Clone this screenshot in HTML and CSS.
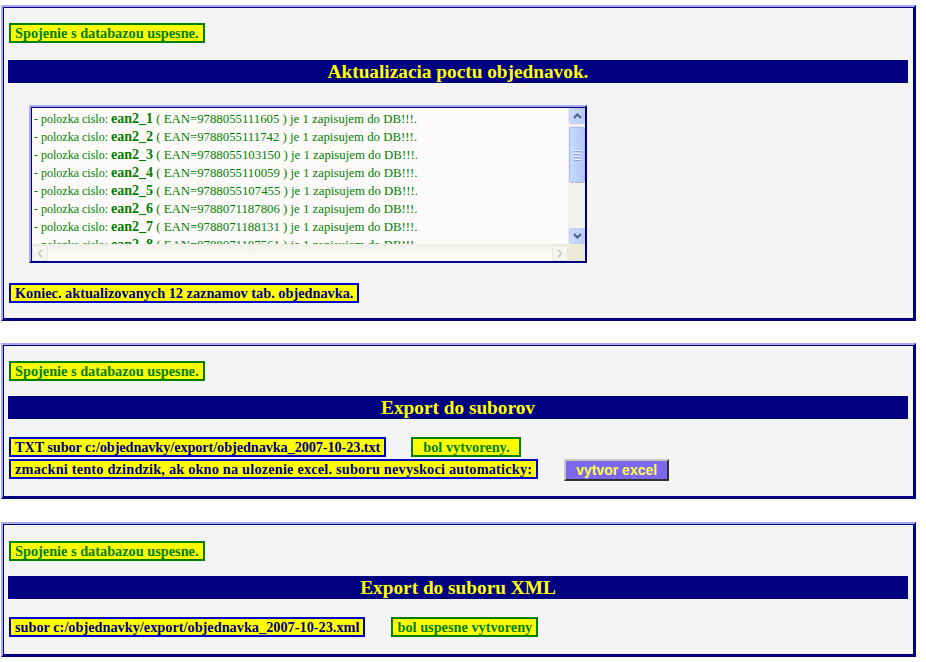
FILE: index.html
```html
<!DOCTYPE html>
<html>
<head>
<meta charset="utf-8">
<link rel="stylesheet" href="styles.css">
</head>
<body>
<div class="panel p1">
  <div class="row"><span class="tag ok">Spojenie s databazou uspesne.</span></div>
  <div class="bar">Aktualizacia poctu objednavok.</div>
  <div class="scroll">
    <div class="scroll-content">
      <div class="line">- polozka cislo: <b>ean2_1</b><span class="rest"> ( EAN=9788055111605 ) je 1 zapisujem do DB!!!.</span></div>
      <div class="line">- polozka cislo: <b>ean2_2</b><span class="rest"> ( EAN=9788055111742 ) je 1 zapisujem do DB!!!.</span></div>
      <div class="line">- polozka cislo: <b>ean2_3</b><span class="rest"> ( EAN=9788055103150 ) je 1 zapisujem do DB!!!.</span></div>
      <div class="line">- polozka cislo: <b>ean2_4</b><span class="rest"> ( EAN=9788055110059 ) je 1 zapisujem do DB!!!.</span></div>
      <div class="line">- polozka cislo: <b>ean2_5</b><span class="rest"> ( EAN=9788055107455 ) je 1 zapisujem do DB!!!.</span></div>
      <div class="line">- polozka cislo: <b>ean2_6</b><span class="rest"> ( EAN=9788071187806 ) je 1 zapisujem do DB!!!.</span></div>
      <div class="line">- polozka cislo: <b>ean2_7</b><span class="rest"> ( EAN=9788071188131 ) je 1 zapisujem do DB!!!.</span></div>
      <div class="line">- polozka cislo: <b>ean2_8</b><span class="rest"> ( EAN=9788071187561 ) je 1 zapisujem do DB!!!.</span></div>
    </div>
    <div class="vbar">
      <div class="sbtn up"><svg width="9" height="6" viewBox="0 0 9 6"><path d="M1 5 L4.5 1.5 L8 5" fill="none" stroke="#4d6185" stroke-width="2"/></svg></div>
      <div class="thumb"><span></span><span></span><span></span><span></span></div>
      <div class="vtrack"></div>
      <div class="sbtn down"><svg width="9" height="6" viewBox="0 0 9 6"><path d="M1 1 L4.5 4.5 L8 1" fill="none" stroke="#4d6185" stroke-width="2"/></svg></div>
    </div>
    <div class="hbar">
      <div class="hbtn"><svg width="6" height="9" viewBox="0 0 6 9"><path d="M5 1 L1.5 4.5 L5 8" fill="none" stroke="#c9c7ba" stroke-width="1.6"/></svg></div>
      <div class="htrack"></div>
      <div class="hbtn"><svg width="6" height="9" viewBox="0 0 6 9"><path d="M1 1 L4.5 4.5 L1 8" fill="none" stroke="#c9c7ba" stroke-width="1.6"/></svg></div>
    </div>
    <div class="corner"></div>
  </div>
  <div class="row"><span class="tag info">Koniec. aktualizovanych 12 zaznamov tab. objednavka.</span></div>
</div>

<div class="panel p2">
  <div class="row"><span class="tag ok">Spojenie s databazou uspesne.</span></div>
  <div class="bar">Export do suborov</div>
  <div class="row r1">
    <span class="tag info tight">TXT subor c:/objednavky/export/objednavka_2007-10-23.txt</span>
    <span class="tag ok roomy">bol vytvoreny.</span>
  </div>
  <div class="row r2">
    <span class="tag info loose">zmackni tento dzindzik, ak okno na ulozenie excel. suboru nevyskoci automaticky:</span>
    <button class="btn">vytvor excel</button>
  </div>
</div>

<div class="panel p3">
  <div class="row"><span class="tag ok">Spojenie s databazou uspesne.</span></div>
  <div class="bar">Export do suboru XML</div>
  <div class="row r1 wide">
    <span class="tag info">subor c:/objednavky/export/objednavka_2007-10-23.xml</span>
    <span class="tag ok">bol uspesne vytvoreny</span>
  </div>
</div>
</body>
</html>
```

FILE: styles.css
```css
html, body {
  margin: 0;
  padding: 0;
  background: #ffffff;
  font-family: "Liberation Serif", "Times New Roman", serif;
}

.panel {
  box-sizing: border-box;
  width: 915px;
  margin-left: 1px;
  background: #f4f4f7;
  border: 2px solid;
  border-color: #a9a9ec #000080 #000080 #a9a9ec;
  box-shadow: inset 1px 1px 0 #000080, inset -1px -1px 0 #000080;
  padding: 16px 6px 16px 5px;
}

.p1 { margin-top: 5px; }
.p2 { margin-top: 22px; }
.p3 { margin-top: 23px; padding-top: 17px; padding-bottom: 18px; }

.row {
  display: flex;
  align-items: flex-start;
  padding-left: 1px;
}

.tag {
  display: inline-block;
  box-sizing: border-box;
  height: 20px;
  line-height: 16px;
  padding: 0 4px 0 4px;
  font-size: 14.3px;
  font-weight: bold;
  background: #ffff00;
  border: 2px solid;
  white-space: nowrap;
}

.tag.ok { color: #008000; border-color: #008000; }
.tag.info { color: #000080; border-color: #0000cc; }
.tag.tight { letter-spacing: -0.1px; }
.tag.loose { letter-spacing: 0.19px; }
.tag.roomy { padding: 0 9px 0 10px; }

.bar {
  height: 23px;
  line-height: 23px;
  margin-top: 17px;
  background: #000080;
  color: #ffff00;
  font-weight: bold;
  font-size: 19.3px;
  text-align: center;
}

.p2 .bar, .p3 .bar { margin-top: 15px; }

/* scroll box */
.scroll {
  box-sizing: border-box;
  width: 558px;
  height: 158px;
  margin: 22px 0 20px 21px;
  border: 2px solid;
  border-color: #a9a9ec #000080 #000080 #a9a9ec;
  box-shadow: inset 1px 1px 0 #000080;
  padding: 1px 0 0 1px;
  background: #fdfbf9;
  display: grid;
  grid-template-columns: 1fr 17px;
  grid-template-rows: 1fr 17px;
}

.scroll-content {
  overflow: hidden;
  padding: 2px 0 0 2px;
  color: #008000;
  font-size: 12px;
}

.line {
  height: 18px;
  line-height: 18px;
  white-space: nowrap;
}

.line b {
  font-size: 14px;
}

.line .rest {
  font-size: 12.8px;
}

.vbar {
  display: flex;
  flex-direction: column;
  background: #f3f1ec;
  border-left: 1px solid #efeeea;
}

.sbtn {
  box-sizing: border-box;
  height: 16px;
  background: linear-gradient(90deg, #cfdcfd, #b8cbf8);
  border: 1px solid #bbcdf5;
  border-radius: 2px;
  display: flex;
  align-items: center;
  justify-content: center;
}

.thumb {
  box-sizing: border-box;
  height: 56px;
  margin-top: 3px;
  background: linear-gradient(90deg, #c9d8fd, #b4c8f6);
  border: 1px solid #a7bdeb;
  border-radius: 2px;
  display: flex;
  flex-direction: column;
  align-items: center;
  justify-content: center;
  gap: 1px;
}

.thumb span {
  width: 7px;
  height: 1px;
  background: #eef3fe;
  border-bottom: 1px solid #8ca5dc;
}

.vtrack { flex: 1; }

.hbar {
  display: flex;
  background: linear-gradient(#f3f1ea, #fefefb);
  border-top: 1px solid #f0efe9;
}

.hbtn {
  box-sizing: border-box;
  width: 16px;
  height: 16px;
  border: 1px solid #e8e6dc;
  background: #f6f5ef;
  border-radius: 2px;
  display: flex;
  align-items: center;
  justify-content: center;
}

.htrack { flex: 1; }

.corner {
  background: #ece9d8;
}

/* export rows */
.r1 {
  margin-top: 18px;
  gap: 25px;
}

.r2 {
  margin-top: 2px;
  gap: 26px;
}

.wide { gap: 26px; }

.btn {
  box-sizing: border-box;
  height: 22px;
  padding: 0 10px;
  font-family: "Liberation Sans", Arial, sans-serif;
  font-weight: bold;
  font-size: 14px;
  color: #ffff44;
  background: #7b68ee;
  border: 2px solid;
  border-color: #c8c8c8 #303030 #303030 #c8c8c8;
  cursor: pointer;
}
```
